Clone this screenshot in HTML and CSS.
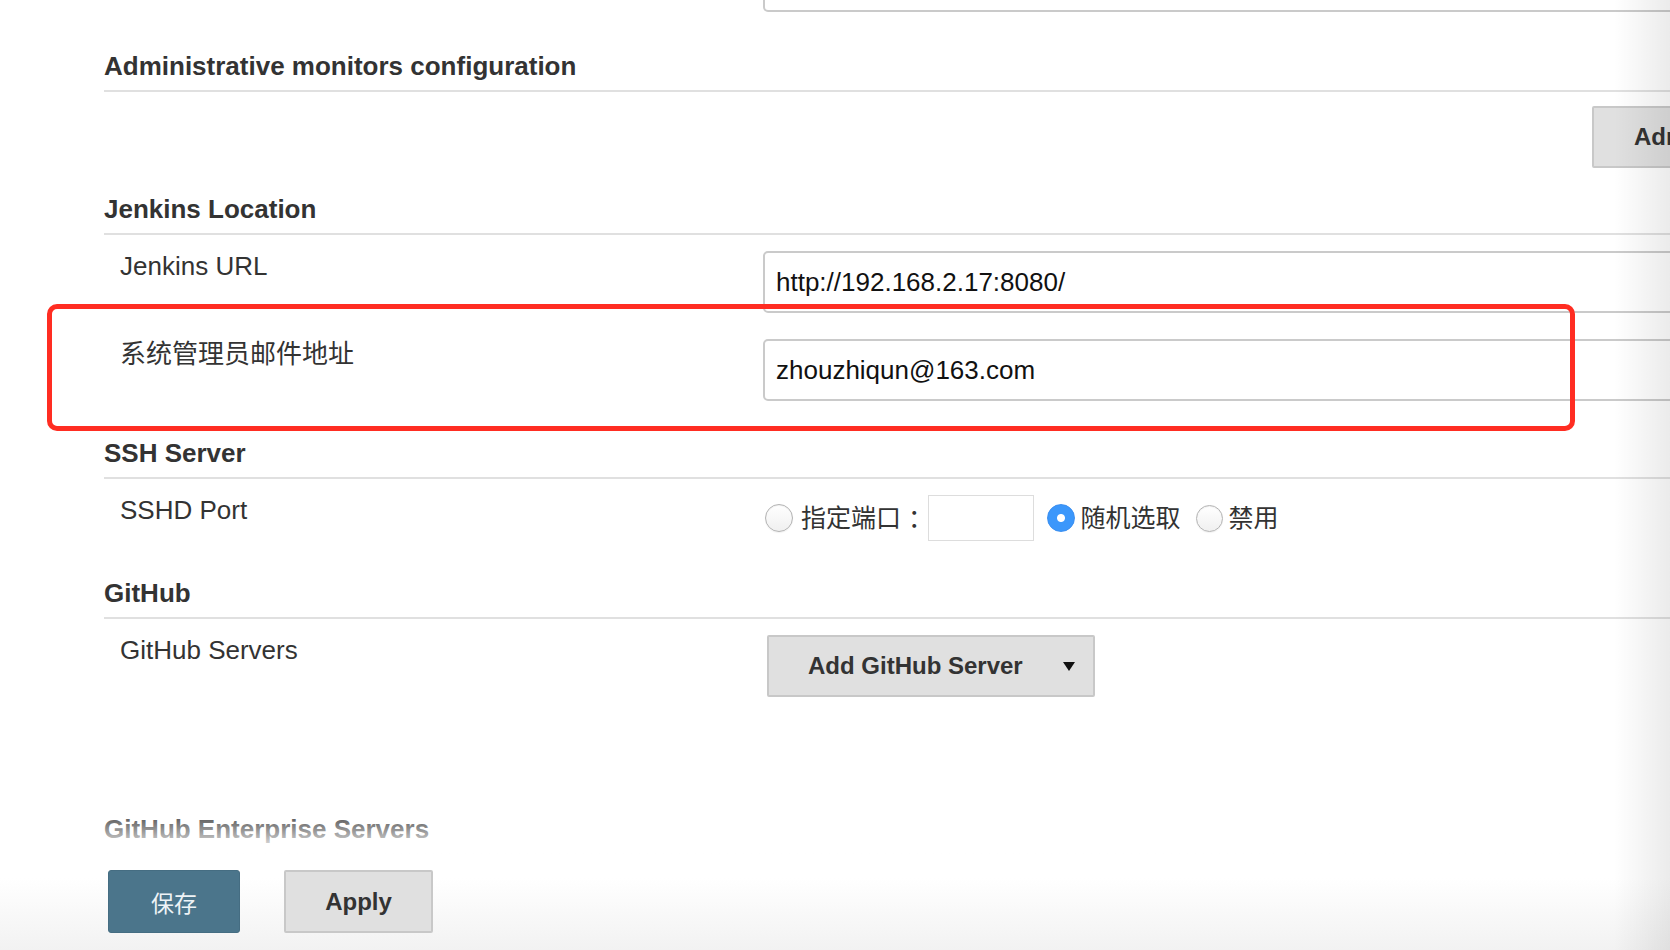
FILE: index.html
```html
<!DOCTYPE html>
<html lang="zh-CN">
<head>
<meta charset="utf-8">
<title>Configure System</title>
<link rel="stylesheet" href="styles.css">
</head>
<body>
<div class="page">
  <div class="row row--cut">
    <div class="row-label"></div>
    <div class="row-field"><div class="textbox textbox--cut"></div></div>
  </div>

  <section class="section section--admin">
    <h2 class="section-header">Administrative monitors configuration</h2>
    <div class="advanced-row">
      <button class="btn btn--grey">Administrative monitors...</button>
    </div>
  </section>

  <section class="section section--after-advanced">
    <h2 class="section-header">Jenkins Location</h2>
    <div class="row">
      <div class="row-label">Jenkins URL</div>
      <div class="row-field"><input class="textbox" type="text" value="http://192.168.2.17:8080/"></div>
    </div>
    <div class="row">
      <div class="row-label">系统管理员邮件地址</div>
      <div class="row-field"><input class="textbox" type="text" value="zhouzhiqun@163.com"></div>
    </div>
  </section>

  <section class="section">
    <h2 class="section-header">SSH Server</h2>
    <div class="row">
      <div class="row-label">SSHD Port</div>
      <div class="row-field radio-group">
        <input class="radio radio--first" type="radio" name="sshd">
        <span class="radio-text">指定端口<span class="colon">：</span></span>
        <input class="port-box" type="text">
        <input class="radio radio--second" type="radio" name="sshd" checked>
        <span class="radio-text">随机选取</span>
        <input class="radio radio--third" type="radio" name="sshd">
        <span class="radio-text">禁用</span>
      </div>
    </div>
  </section>

  <section class="section">
    <h2 class="section-header">GitHub</h2>
    <div class="row">
      <div class="row-label">GitHub Servers</div>
      <div class="row-field">
        <button class="btn btn--grey btn--menu">Add GitHub Server<span class="caret"></span></button>
      </div>
    </div>
  </section>

  <section class="section section--enterprise">
    <h2 class="section-header">GitHub Enterprise Servers</h2>
  </section>
</div>

<div class="bottom-sticker">
  <button class="btn btn--save">保存</button>
  <button class="btn btn--grey btn--apply">Apply</button>
</div>

<div class="annotation"></div>
<div class="side-shadow"></div>
</body>
</html>
```

FILE: styles.css
```css
html, body {
  margin: 0;
  padding: 0;
}

body {
  width: 1670px;
  height: 950px;
  overflow: hidden;
  position: relative;
  background: #ffffff;
  color: #333333;
  font-family: "Liberation Sans", Arial, "Noto Sans CJK SC", sans-serif;
}

.page {
  width: 2100px;
  padding-left: 104px;
  box-sizing: border-box;
}

.section {
  margin-top: 37px;
}

.section--admin {
  margin-top: 39px;
}

.section--after-advanced {
  margin-top: 26px;
}

.section--enterprise {
  margin-top: 117px;
}

.section-header {
  margin: 0;
  font-size: 26px;
  line-height: 30px;
  font-weight: bold;
  color: #333333;
  padding-bottom: 9px;
  border-bottom: 2px solid #e0e0e0;
}

.row {
  display: flex;
  align-items: flex-start;
  margin-top: 26px;
  padding-left: 16px;
}

.section-header + .row {
  margin-top: 16px;
}

.row--cut {
  margin-top: 0;
  height: 12px;
}

.row-label {
  width: 643px;
  flex: none;
  font-size: 26px;
  line-height: 30px;
  color: #333333;
}

.row-field {
  flex: 1;
  min-width: 0;
}

.textbox {
  display: block;
  width: 100%;
  height: 62px;
  box-sizing: border-box;
  border: 2px solid #cacaca;
  border-radius: 5px;
  padding: 0 11px;
  margin: 0;
  font-family: "Liberation Sans", Arial, sans-serif;
  font-size: 26px;
  color: #111111;
  background: #ffffff;
  outline: none;
}

.textbox--cut {
  height: 12px;
  border-top: none;
  border-radius: 0 0 0 5px;
}

.advanced-row {
  display: flex;
  margin-top: 14px;
  padding-left: 1488px;
}

.btn {
  font-family: "Liberation Sans", Arial, "Noto Sans CJK SC", sans-serif;
  font-size: 24px;
  font-weight: bold;
  height: 62px;
  box-sizing: border-box;
  margin: 0;
  cursor: pointer;
  white-space: nowrap;
}

.btn--grey {
  background: #e0e0e0;
  border: 2px solid #c8c8c8;
  border-radius: 2px;
  color: #333333;
  padding: 0 40px;
}

.btn--menu {
  display: flex;
  align-items: center;
  margin-left: 4px;
  width: 328px;
  padding: 0 0 0 39px;
}

.caret {
  width: 0;
  height: 0;
  margin-left: 40px;
  border-left: 6px solid transparent;
  border-right: 6px solid transparent;
  border-top: 9px solid #111111;
}

.radio-group {
  display: flex;
  align-items: center;
  height: 46px;
}

.radio {
  appearance: none;
  -webkit-appearance: none;
  flex: none;
  width: 28px;
  height: 28px;
  margin: 0;
  border-radius: 50%;
  border: 1px solid #b3b3b3;
  background: linear-gradient(#ffffff, #f0f0f0);
  box-shadow: inset 0 1px 1px rgba(0, 0, 0, 0.06), 0 1px 1px rgba(0, 0, 0, 0.05);
}

.radio:checked {
  border-color: #3a8ef0;
  background: radial-gradient(circle, #ffffff 0 3.5px, #3b97fb 4.5px);
  box-shadow: none;
}

.radio--first {
  margin-left: 2px;
}

.radio--second {
  margin-left: 13px;
}

.radio--third {
  margin-left: 15px;
  width: 27px;
  height: 27px;
}

.radio-text {
  margin-left: 7px;
  font-size: 25px;
  line-height: 30px;
  color: #333333;
  white-space: nowrap;
}

.radio--first + .radio-text {
  margin-left: 8px;
}

.radio--second + .radio-text,
.radio--third + .radio-text {
  margin-left: 6px;
}

.colon {
  font-feature-settings: "halt";
  margin: 0 5px 0 7px;
}

.port-box {
  width: 106px;
  height: 46px;
  box-sizing: border-box;
  margin: 0 0 0 2px;
  border: 1px solid #dddddd;
  background: #ffffff;
  padding: 0 6px;
  font-size: 24px;
  outline: none;
}

.bottom-sticker {
  position: absolute;
  left: 0;
  bottom: 0;
  width: 100%;
  height: 142px;
  box-sizing: border-box;
  padding: 62px 0 0 108px;
  display: flex;
  align-items: flex-start;
  gap: 44px;
  background: linear-gradient(to bottom,
    rgba(255, 255, 255, 0) 0px,
    rgba(255, 255, 255, 1) 46px,
    #ffffff 70px,
    #f2f2f2 142px);
}

.btn--save {
  width: 132px;
  height: 63px;
  background: #4b758b;
  border: 1px solid #456d82;
  border-radius: 3px;
  color: #eef3f6;
  font-size: 23px;
  font-weight: normal;
  padding: 0;
}

.btn--apply {
  width: 149px;
  height: 63px;
  padding: 0;
}

.annotation {
  position: absolute;
  left: 47px;
  top: 304px;
  width: 1528px;
  height: 127px;
  box-sizing: border-box;
  border: 5px solid #ff2d22;
  border-radius: 10px;
  pointer-events: none;
}

.side-shadow {
  position: absolute;
  top: 0;
  right: 0;
  width: 56px;
  height: 100%;
  background: linear-gradient(to right, rgba(0, 0, 0, 0), rgba(0, 0, 0, 0.08));
  pointer-events: none;
}
```
